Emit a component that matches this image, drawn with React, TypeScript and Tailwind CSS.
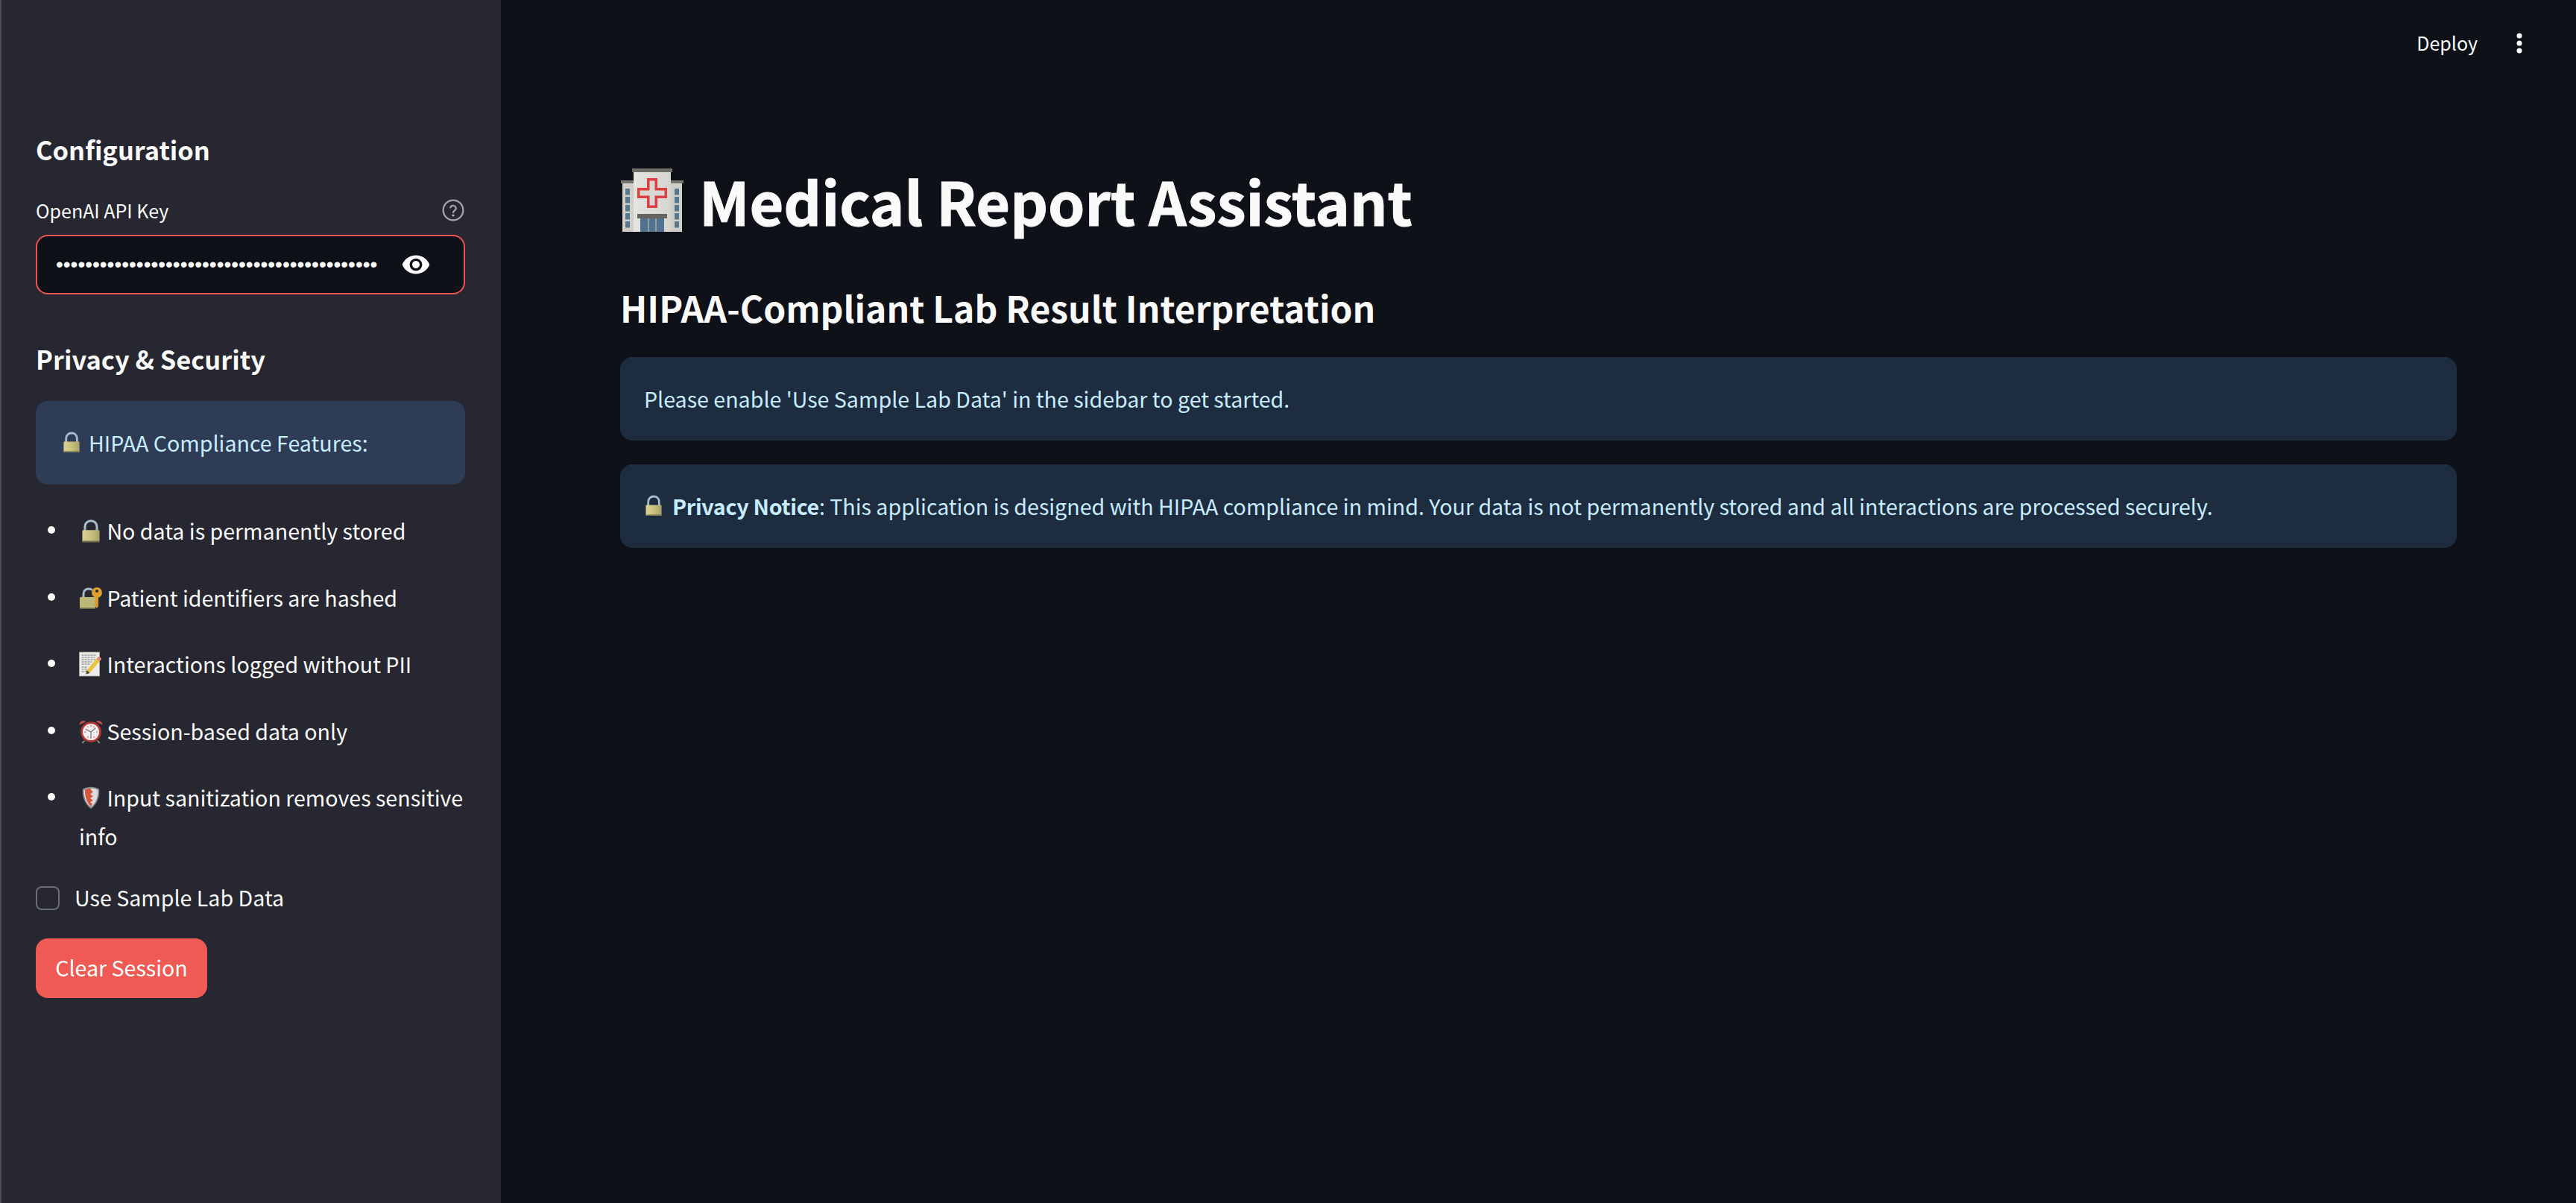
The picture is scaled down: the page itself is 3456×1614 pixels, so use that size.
import React from 'react'

const FONT = "font-['Noto_Sans_CJK_SC','Noto_Sans',sans-serif]"

const LockIcon = ({ className }: { className?: string }) => (
  <svg className={className} viewBox="0 0 32 36" fill="none">
    <defs>
      <linearGradient id="lockBody" x1="0" y1="0" x2="1" y2="0">
        <stop offset="0%" stopColor="#d8d193" />
        <stop offset="50%" stopColor="#c9c27f" />
        <stop offset="100%" stopColor="#a8a268" />
      </linearGradient>
    </defs>
    <path d="M7 17V11C7 5.5 11 2 16 2s9 3.5 9 9v6" stroke="#a9bccb" strokeWidth="3.4" />
    <rect x="3" y="16" width="26" height="18" rx="1.5" fill="url(#lockBody)" />
    <rect x="3" y="32" width="26" height="2" fill="#77744e" />
  </svg>
)

const LockKeyIcon = ({ className }: { className?: string }) => (
  <svg className={className} viewBox="0 0 32 32" fill="none">
    <path d="M6 15V10C6 5.5 9 3 13 3c2 0 3.5.6 4.6 1.8" stroke="#a9bccb" strokeWidth="3" />
    <rect x="1" y="14" width="21" height="16" rx="1.2" fill="#bdb775" />
    <rect x="1" y="28.4" width="21" height="1.6" fill="#6f6c48" />
    <path d="M22 10h4v16l-2 3-2-2v-2h-1.6v-2H22v-2h-1.6v-2H22z" fill="#d99a2b" />
    <circle cx="24" cy="8" r="7" fill="#e0a02e" />
    <circle cx="24" cy="6" r="2" fill="#262730" />
  </svg>
)

const MemoIcon = ({ className }: { className?: string }) => (
  <svg className={className} viewBox="0 0 32 34" fill="none">
    <rect x="1" y="1" width="27" height="32" fill="#ecebe6" stroke="#a8a8a4" strokeWidth="0.8" />
    <path d="M4 5h20M4 8h18M4 11h20M4 14h14M4 17h12M4 21h8M4 24h7M4 27h10" stroke="#75757a" strokeWidth="1" strokeDasharray="3 1" />
    <path d="M11 25l13-15 4 3.5-13 15-5 1.5z" fill="#efc23c" />
    <path d="M24 10l2-2.4c.6-.7 1.4-.7 2-.2l2 1.7c.6.5.6 1.3.1 1.9l-2 2.4z" fill="#e88a80" />
    <path d="M11 25l-1 5.5 5-1.5z" fill="#4a4038" />
  </svg>
)

const ClockIcon = ({ className }: { className?: string }) => (
  <svg className={className} viewBox="0 0 32 32" fill="none">
    <path d="M1.5 8a5 5 0 0 1 8-4zM30.500 8a5 5 0 0 0-8-4z" fill="#cf4f4b" />
    <path d="M8 28l-3 3M24 28l3 3" stroke="#9a9a9a" strokeWidth="1.6" />
    <circle cx="16" cy="17" r="13" fill="#b93733" />
    <circle cx="16" cy="17" r="10.4" fill="#f1efef" />
    <path d="M16 8.500v2M16 23.500v2M7.500 17h2M22.500 17h2M11.700 9.800l.9 1.600M20.300 9.800l-.9 1.600M11.700 24.200l.9-1.600M20.300 24.200l-.9-1.600" stroke="#d9534f" strokeWidth="1" />
    <path d="M16 17L9.500 13.500M16 17l5.500-4.500M16 17v7" stroke="#77777c" strokeWidth="1.2" strokeLinecap="round" />
  </svg>
)

const ShieldIcon = ({ className }: { className?: string }) => (
  <svg className={className} viewBox="0 0 28 34" fill="none">
    <path d="M14 1c4 0 8 1 12 3 .6 9-1 20-12 29C3 24 1.400 13 2 4c4-2 8-3 12-3z" fill="#85878a" />
    <path d="M14 3c3.500 0 7 .8 10 2.400.5 8-1 17.600-10 25.100C5 23 3.500 13.400 4 5.400 7 3.800 10.500 3 14 3z" fill="#dcdcdc" />
    <path d="M14 3.200c-3 0-6.500.8-8.500 1.900C5 13 6.800 22 14 29.500l2-4-3-2 4-3-4-3 4-3-4-3 4-3-3-3z" fill="#d4573e" />
  </svg>
)

const HospitalIcon = ({ className }: { className?: string }) => (
  <svg className={className} viewBox="0 0 84 86" fill="none">
    <defs>
      <linearGradient id="hospWall" x1="0" y1="0" x2="1" y2="0">
        <stop offset="0%" stopColor="#e6e4df" />
        <stop offset="100%" stopColor="#d6d4cf" />
      </linearGradient>
    </defs>
    <rect x="2" y="18" width="80" height="67" fill="#d0cec9" />
    <rect x="0" y="16" width="84" height="4" fill="#77756f" />
    <rect x="17" y="4" width="50" height="81" fill="url(#hospWall)" />
    <rect x="15" y="0" width="54" height="5" fill="#6f6d68" />
    {[0, 1, 2, 3, 4].map(i => (
      <React.Fragment key={i}>
        <rect x="6" y={27 + i * 11} width="6" height="8.5" fill="#55788f" />
        <rect x="72" y={27 + i * 11} width="6" height="8.5" fill="#55788f" />
      </React.Fragment>
    ))}
    <path d="M35 13h14v13h13v14H49v13H35V40H22V26h13z" fill="#dd3f41" />
    <path d="M38.500 16.500h7V29.500h13v7h-13v13h-7v-13h-13v-7h13z" fill="#d9d7d3" />
    <rect x="22" y="61" width="40" height="6" fill="#66645f" />
    <rect x="26" y="67" width="32" height="18" fill="#4f7390" />
    <path d="M37 67v18M47 67v18" stroke="#aaa9a4" strokeWidth="1.5" />
  </svg>
)

const EyeIcon = () => (
  <svg className="w-[40px] h-[40px]" viewBox="0 0 24 24" fill="#ffffff">
    <path d="M12 4.500C7 4.500 2.730 7.610 1 12c1.730 4.390 6 7.500 11 7.500s9.270-3.110 11-7.500c-1.730-4.390-6-7.500-11-7.500zM12 17c-2.760 0-5-2.240-5-5s2.240-5 5-5 5 2.240 5 5-2.240 5-5 5zm0-8c-1.660 0-3 1.340-3 3s1.340 3 3 3 3-1.340 3-3-1.340-3-3-3z" />
  </svg>
)

const HelpIcon = () => (
  <svg className="w-[32px] h-[32px]" viewBox="0 0 24 24" fill="none" stroke="#a3a5aa" strokeWidth="1.7">
    <circle cx="12" cy="12" r="10" />
    <path d="M9.200 9.300a2.900 2.900 0 0 1 5.600 1c0 1.900-2.800 2.300-2.800 4" strokeLinecap="round" />
    <circle cx="12" cy="17.300" r="0.5" fill="#a3a5aa" />
  </svg>
)

const features = [
  { icon: <LockIcon className="shrink-0 w-[30px] h-[32px]" />, text: 'No data is permanently stored' },
  { icon: <LockKeyIcon className="shrink-0 w-[34px] h-[32px]" />, text: 'Patient identifiers are hashed' },
  { icon: <MemoIcon className="shrink-0 w-[33px] h-[34px]" />, text: 'Interactions logged without PII' },
  { icon: <ClockIcon className="shrink-0 w-[34px] h-[34px]" />, text: 'Session-based data only' },
  { icon: <ShieldIcon className="shrink-0 w-[26px] h-[33px]" />, text: 'Input sanitization removes sensitive info' },
]

const Sidebar = () => (
  <aside className="w-[672px] shrink-0 bg-[#262730] border-l-2 border-[#4a4b52] pl-[46px] pr-[48px] pt-[176px] text-[#fafafa]">
    <h3 className="text-[34.4px] leading-[48px] font-bold">Configuration</h3>

    <div className="mt-[38px] flex items-center justify-between h-[40px]">
      <label className="text-[25px] leading-[40px]">OpenAI API Key</label>
      <HelpIcon />
    </div>

    <div className="mt-[13px] h-[80px] rounded-[16px] border-2 border-[#ef5350] bg-[#0e1117] flex items-center pl-[25px]">
      <input
        type="password"
        readOnly
        value="sk-proj-xxxxxxxxxxxxxxxxxxxxxxxxxxxxxxxxxxxxxxxxxxxxxxxxxxxxxxxxxxxxxxxxxxxxxxxxx"
        className="w-[431px] bg-transparent text-white text-[28px] font-['Liberation_Sans',sans-serif] outline-none"
      />
      <div className="ml-[32px]">
        <EyeIcon />
      </div>
    </div>

    <h3 className="mt-[62px] text-[34.4px] leading-[48px] font-bold">Privacy &amp; Security</h3>

    <div className="mt-[33px] h-[112px] rounded-[16px] bg-[#2e3d55] flex items-center pl-[35px] text-[#c7ebff] text-[28.6px]">
      <LockIcon className="w-[26px] h-[30px] mr-[10px]" />
      <span>HIPAA Compliance Features:</span>
    </div>

    <ul className="mt-[36px] flex flex-col gap-[38.4px] pl-[58px] text-[28.6px] leading-[51.2px]">
      {features.map(f => (
        <li key={f.text} className="relative">
          <span className="absolute left-[-42px] top-[20px] w-[10px] h-[10px] rounded-full bg-[#fafafa]" />
          <span className="inline-flex justify-center items-center w-[31px] h-[30px] align-[-5px]">{f.icon}</span>{' '}
          {f.text}
        </li>
      ))}
    </ul>

    <label className="mt-[38px] flex items-center h-[40px] text-[28.6px]">
      <span className="w-[32px] h-[32px] rounded-[8px] border-2 border-[#6b6d75] bg-[#262730]" />
      <span className="ml-[20px]">Use Sample Lab Data</span>
    </label>

    <button className="mt-[34px] h-[80px] w-[230px] rounded-[16px] bg-[#ef5a55] text-white text-[28.6px] flex items-center justify-center">
      Clear Session
    </button>
  </aside>
)

export default function App() {
  return (
    <div className={`${FONT} flex h-[1614px] w-[3456px] overflow-hidden bg-[#0e1117]`}>
      <Sidebar />
      <main className="flex-1 relative text-[#fafafa]">
        <header className="absolute top-0 right-0 flex items-center h-[116px] pr-[68px]">
          <span className="text-[25px]">Deploy</span>
          <svg className="ml-[48px] w-[16px] h-[40px]" viewBox="0 0 16 40" fill="#ffffff">
            <circle cx="8" cy="10" r="3.5" />
            <circle cx="8" cy="20" r="3.5" />
            <circle cx="8" cy="30" r="3.5" />
          </svg>
        </header>

        <div className="px-[160px] pt-[214px]">
          <h1 className="flex items-center h-[110px] text-[79px] font-bold [-webkit-text-stroke:1px_#fafafa]">
            <HospitalIcon className="w-[86px] h-[86px] mr-[20px]" />
            <span>Medical Report Assistant</span>
          </h1>
          <h2 className="mt-[52px] h-[72px] leading-[72px] text-[48px] font-bold">HIPAA-Compliant Lab Result Interpretation</h2>

          <div className="mt-[31px] h-[112px] rounded-[16px] bg-[#1e2c40] flex items-center pl-[32px] text-[#c7ebff] text-[28.6px]">
            Please enable 'Use Sample Lab Data' in the sidebar to get started.
          </div>
          <div className="mt-[32px] h-[112px] rounded-[16px] bg-[#1e2c40] flex items-center pl-[32px] text-[#c7ebff] text-[28.6px]">
            <LockIcon className="w-[26px] h-[30px] mr-[12px]" />
            <p>
              <strong className="font-bold tracking-[-0.3px]">Privacy Notice</strong>: This application is designed with HIPAA compliance in mind. Your data is not permanently stored and all interactions are processed securely.
            </p>
          </div>
        </div>
      </main>
    </div>
  )
}
